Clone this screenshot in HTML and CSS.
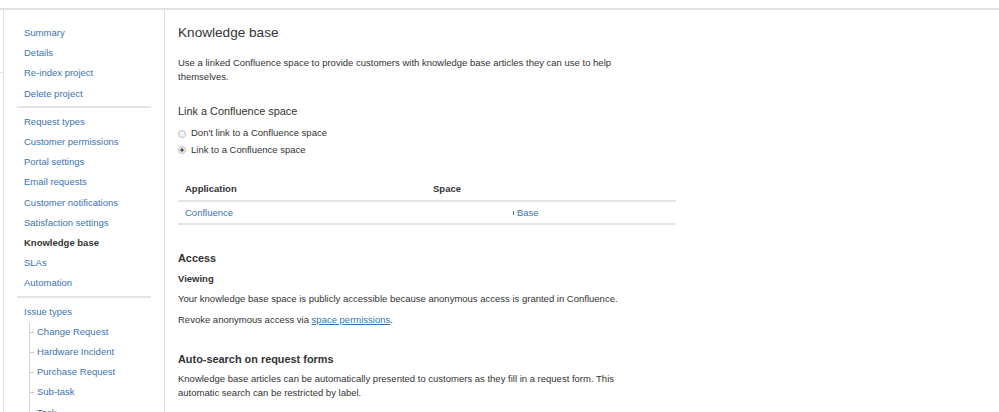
FILE: index.html
```html
<!DOCTYPE html>
<html lang="en">

<head>
    <meta charset="UTF-8">
    <meta name="viewport" content="width=device-width, initial-scale=1.0">
    <title>Knowledge base - Project settings</title>
    <link rel="stylesheet" href="styles.css">
</head>

<body>
    <div class="topbar"></div>

    <div class="page">
        <!-- Margem esquerda -->
        <div class="gutter">
            <div class="gutter-tick"></div>
        </div>

        <!-- Menu lateral -->
        <div class="sidebar">
            <ul class="nav">
                <li><a href="#">Summary</a></li>
                <li><a href="#">Details</a></li>
                <li><a href="#">Re-index project</a></li>
                <li><a href="#">Delete project</a></li>
            </ul>
            <div class="sep"></div>
            <ul class="nav">
                <li><a href="#">Request types</a></li>
                <li><a href="#">Customer permissions</a></li>
                <li><a href="#">Portal settings</a></li>
                <li><a href="#">Email requests</a></li>
                <li><a href="#">Customer notifications</a></li>
                <li><a href="#">Satisfaction settings</a></li>
                <li class="active">Knowledge base</li>
                <li><a href="#">SLAs</a></li>
                <li><a href="#">Automation</a></li>
            </ul>
            <div class="sep"></div>
            <ul class="nav">
                <li><a href="#">Issue types</a></li>
            </ul>
            <ul class="nav tree">
                <li><a href="#">Change Request</a></li>
                <li><a href="#">Hardware Incident</a></li>
                <li><a href="#">Purchase Request</a></li>
                <li><a href="#">Sub-task</a></li>
                <li><a href="#">Task</a></li>
            </ul>
        </div>

        <!-- Conteúdo principal -->
        <div class="content">
            <h2>Knowledge base</h2>
            <p class="intro">Use a linked Confluence space to provide customers with knowledge base articles they can use to help themselves.</p>

            <h3 class="sub">Link a Confluence space</h3>
            <div class="radios">
                <label class="radio-row"><span class="radio"></span>Don't link to a Confluence space</label>
                <label class="radio-row"><span class="radio checked"></span>Link to a Confluence space</label>
            </div>

            <table class="links">
                <tr>
                    <th class="col-app">Application</th>
                    <th>Space</th>
                </tr>
                <tr>
                    <td><a href="#">Confluence</a></td>
                    <td><a href="#" class="space-link"><span class="space-icon"></span>Base</a></td>
                </tr>
            </table>

            <h3 class="section-title">Access</h3>
            <h4>Viewing</h4>
            <p class="text">Your knowledge base space is publicly accessible because anonymous access is granted in Confluence.</p>
            <p class="text revoke">Revoke anonymous access via <a href="#" class="underline">space permissions</a>.</p>

            <h3 class="section-title auto">Auto-search on request forms</h3>
            <p class="text desc">Knowledge base articles can be automatically presented to customers as they fill in a request form. This automatic search can be restricted by label.</p>
        </div>
    </div>
</body>

</html>
```

FILE: styles.css
```css
body {
    font-family: "Liberation Sans", Arial, sans-serif;
    font-size: 9.5px;
    color: #333;
    background: #fff;
    margin: 0;
    padding: 0;
}

a {
    color: #3b73af;
    text-decoration: none;
}

.topbar {
    height: 8px;
    border-bottom: 2px solid #e2e2e2;
}

.page {
    display: flex;
    min-height: 402px;
}

.gutter {
    width: 3px;
    border-right: 1px solid #e2e2e2;
}

.gutter-tick {
    margin-top: 62px;
    height: 1px;
    background: #e2e2e2;
}

.sidebar {
    width: 160px;
    border-right: 1px solid #dcdcdc;
    padding-top: 13px;
}

.nav {
    list-style: none;
    margin: 0;
    padding: 0 0 0 20px;
}

.nav li {
    line-height: 20.2px;
    white-space: nowrap;
}

.nav li.active {
    font-weight: bold;
    color: #333;
}

.sep {
    margin: 2.5px 0 3.5px 13px;
    width: 134px;
    height: 2px;
    background: #e4e4e4;
}

.nav.tree {
    margin-left: 25px;
    padding-left: 0;
    border-left: 1px solid #d4d4d4;
}

.nav.tree li::before {
    content: "";
    display: inline-block;
    width: 4px;
    height: 1px;
    background: #c8c8c8;
    margin-right: 3px;
    vertical-align: middle;
}

.content {
    flex: 1;
    padding-left: 13px;
}

h2 {
    font-size: 13.6px;
    font-weight: normal;
    line-height: 20px;
    margin: 13px 0 0;
}

.intro {
    width: 440px;
    line-height: 13.4px;
    margin: 13.3px 0 0;
}

.sub {
    font-size: 10.9px;
    font-weight: normal;
    line-height: 16px;
    margin: 20.3px 0 0;
}

.radios {
    margin-top: 6px;
}

.radio-row {
    display: flex;
    align-items: center;
    line-height: 16.7px;
}

.radio {
    display: inline-block;
    width: 6px;
    height: 6px;
    border: 1px solid #bdbdbd;
    border-radius: 50%;
    background: #f4f4f4;
    margin: 0 5px 0 0;
    box-sizing: content-box;
    position: relative;
}

.radio.checked {
    background: radial-gradient(circle, #555 0, #555 1.4px, #f4f4f4 1.9px);
}

table.links {
    width: 498px;
    border-collapse: collapse;
    margin-top: 18.3px;
}

.links th,
.links td {
    text-align: left;
    line-height: 14px;
    padding: 3.5px 7px;
    border-bottom: 2px solid #e4e4e4;
}

.links th {
    font-weight: bold;
    padding: 5px 7px 4px;
}

.col-app {
    width: 234px;
}

.space-link {
    margin-left: 80px;
}

.space-icon {
    display: inline-block;
    width: 1px;
    height: 4px;
    background: #3b73af;
    margin-right: 3px;
    vertical-align: middle;
}

.section-title {
    font-size: 10.9px;
    font-weight: bold;
    line-height: 16px;
    margin: 25.3px 0 0;
}

.section-title.auto {
    margin-top: 24.3px;
}

h4 {
    font-size: 9.5px;
    font-weight: bold;
    line-height: 14px;
    margin: 6px 0 0;
}

.text {
    line-height: 14px;
    margin: 6px 0 0;
}

.revoke {
    margin-top: 6.7px;
}

.desc {
    width: 440px;
    margin-top: 5px;
}

.underline {
    text-decoration: underline;
}
```
